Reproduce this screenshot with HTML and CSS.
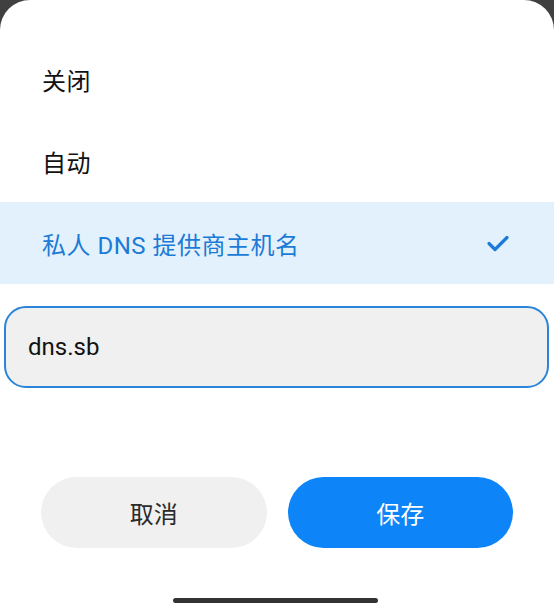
FILE: index.html
```html
<!DOCTYPE html>
<html lang="zh-CN">
<head>
<meta charset="utf-8">
<title>私人 DNS</title>
<link rel="stylesheet" href="styles.css">
</head>
<body>
<div class="sheet">
  <ul class="options">
    <li class="option">关闭</li>
    <li class="option">自动</li>
    <li class="option selected">
      <span>私人 DNS 提供商主机名</span>
      <svg class="check" width="24" height="20" viewBox="0 0 24 20"><path d="M3 10.5 L9 16.5 L21 4.5" fill="none" stroke="#1b7bd6" stroke-width="3.2" stroke-linecap="round" stroke-linejoin="round"/></svg>
    </li>
  </ul>
  <div class="field">dns.sb</div>
  <div class="actions">
    <button class="btn cancel">取消</button>
    <button class="btn save">保存</button>
  </div>
  <div class="home-bar"></div>
</div>
</body>
</html>
```
FILE: styles.css
```css
html, body {
  margin: 0;
  padding: 0;
  background: #404040;
}
body {
  width: 554px;
  height: 612px;
  overflow: hidden;
  font-family: Roboto, "Noto Sans CJK SC", sans-serif;
}
.sheet {
  background: #ffffff;
  height: 612px;
  border-radius: 30px 30px 0 0;
  padding-top: 38px;
  box-sizing: border-box;
  display: flex;
  flex-direction: column;
}
.options {
  list-style: none;
  margin: 0;
  padding: 0;
}
.option {
  height: 82px;
  display: flex;
  align-items: center;
  justify-content: space-between;
  padding: 0 44px 0 42px;
  font-size: 24px;
  letter-spacing: 0.5px;
  color: #111111;
}
.option.selected {
  background: #e3f1fd;
  color: #1b7bd6;
}
.check {
  display: block;
}
.field {
  margin: 22px 5px 0 4px;
  height: 82px;
  box-sizing: border-box;
  border: 2.5px solid #2a84d8;
  border-radius: 22px;
  background: #f0f0f0;
  display: flex;
  align-items: center;
  padding-left: 22px;
  font-size: 24px;
  color: #111111;
}
.actions {
  display: flex;
  gap: 21px;
  padding: 0 41px;
  margin-top: 89px;
}
.btn {
  flex: 1;
  height: 71px;
  border: none;
  border-radius: 36px;
  font-family: Roboto, "Noto Sans CJK SC", sans-serif;
  font-size: 24px;
  padding: 0;
}
.cancel {
  background: #f0f0f0;
  color: #2b2b2b;
}
.save {
  background: #0d84f7;
  color: #ffffff;
}
.home-bar {
  width: 205px;
  height: 5px;
  border-radius: 3px;
  background: #333333;
  margin: 50px 0 0 173px;
}
```
